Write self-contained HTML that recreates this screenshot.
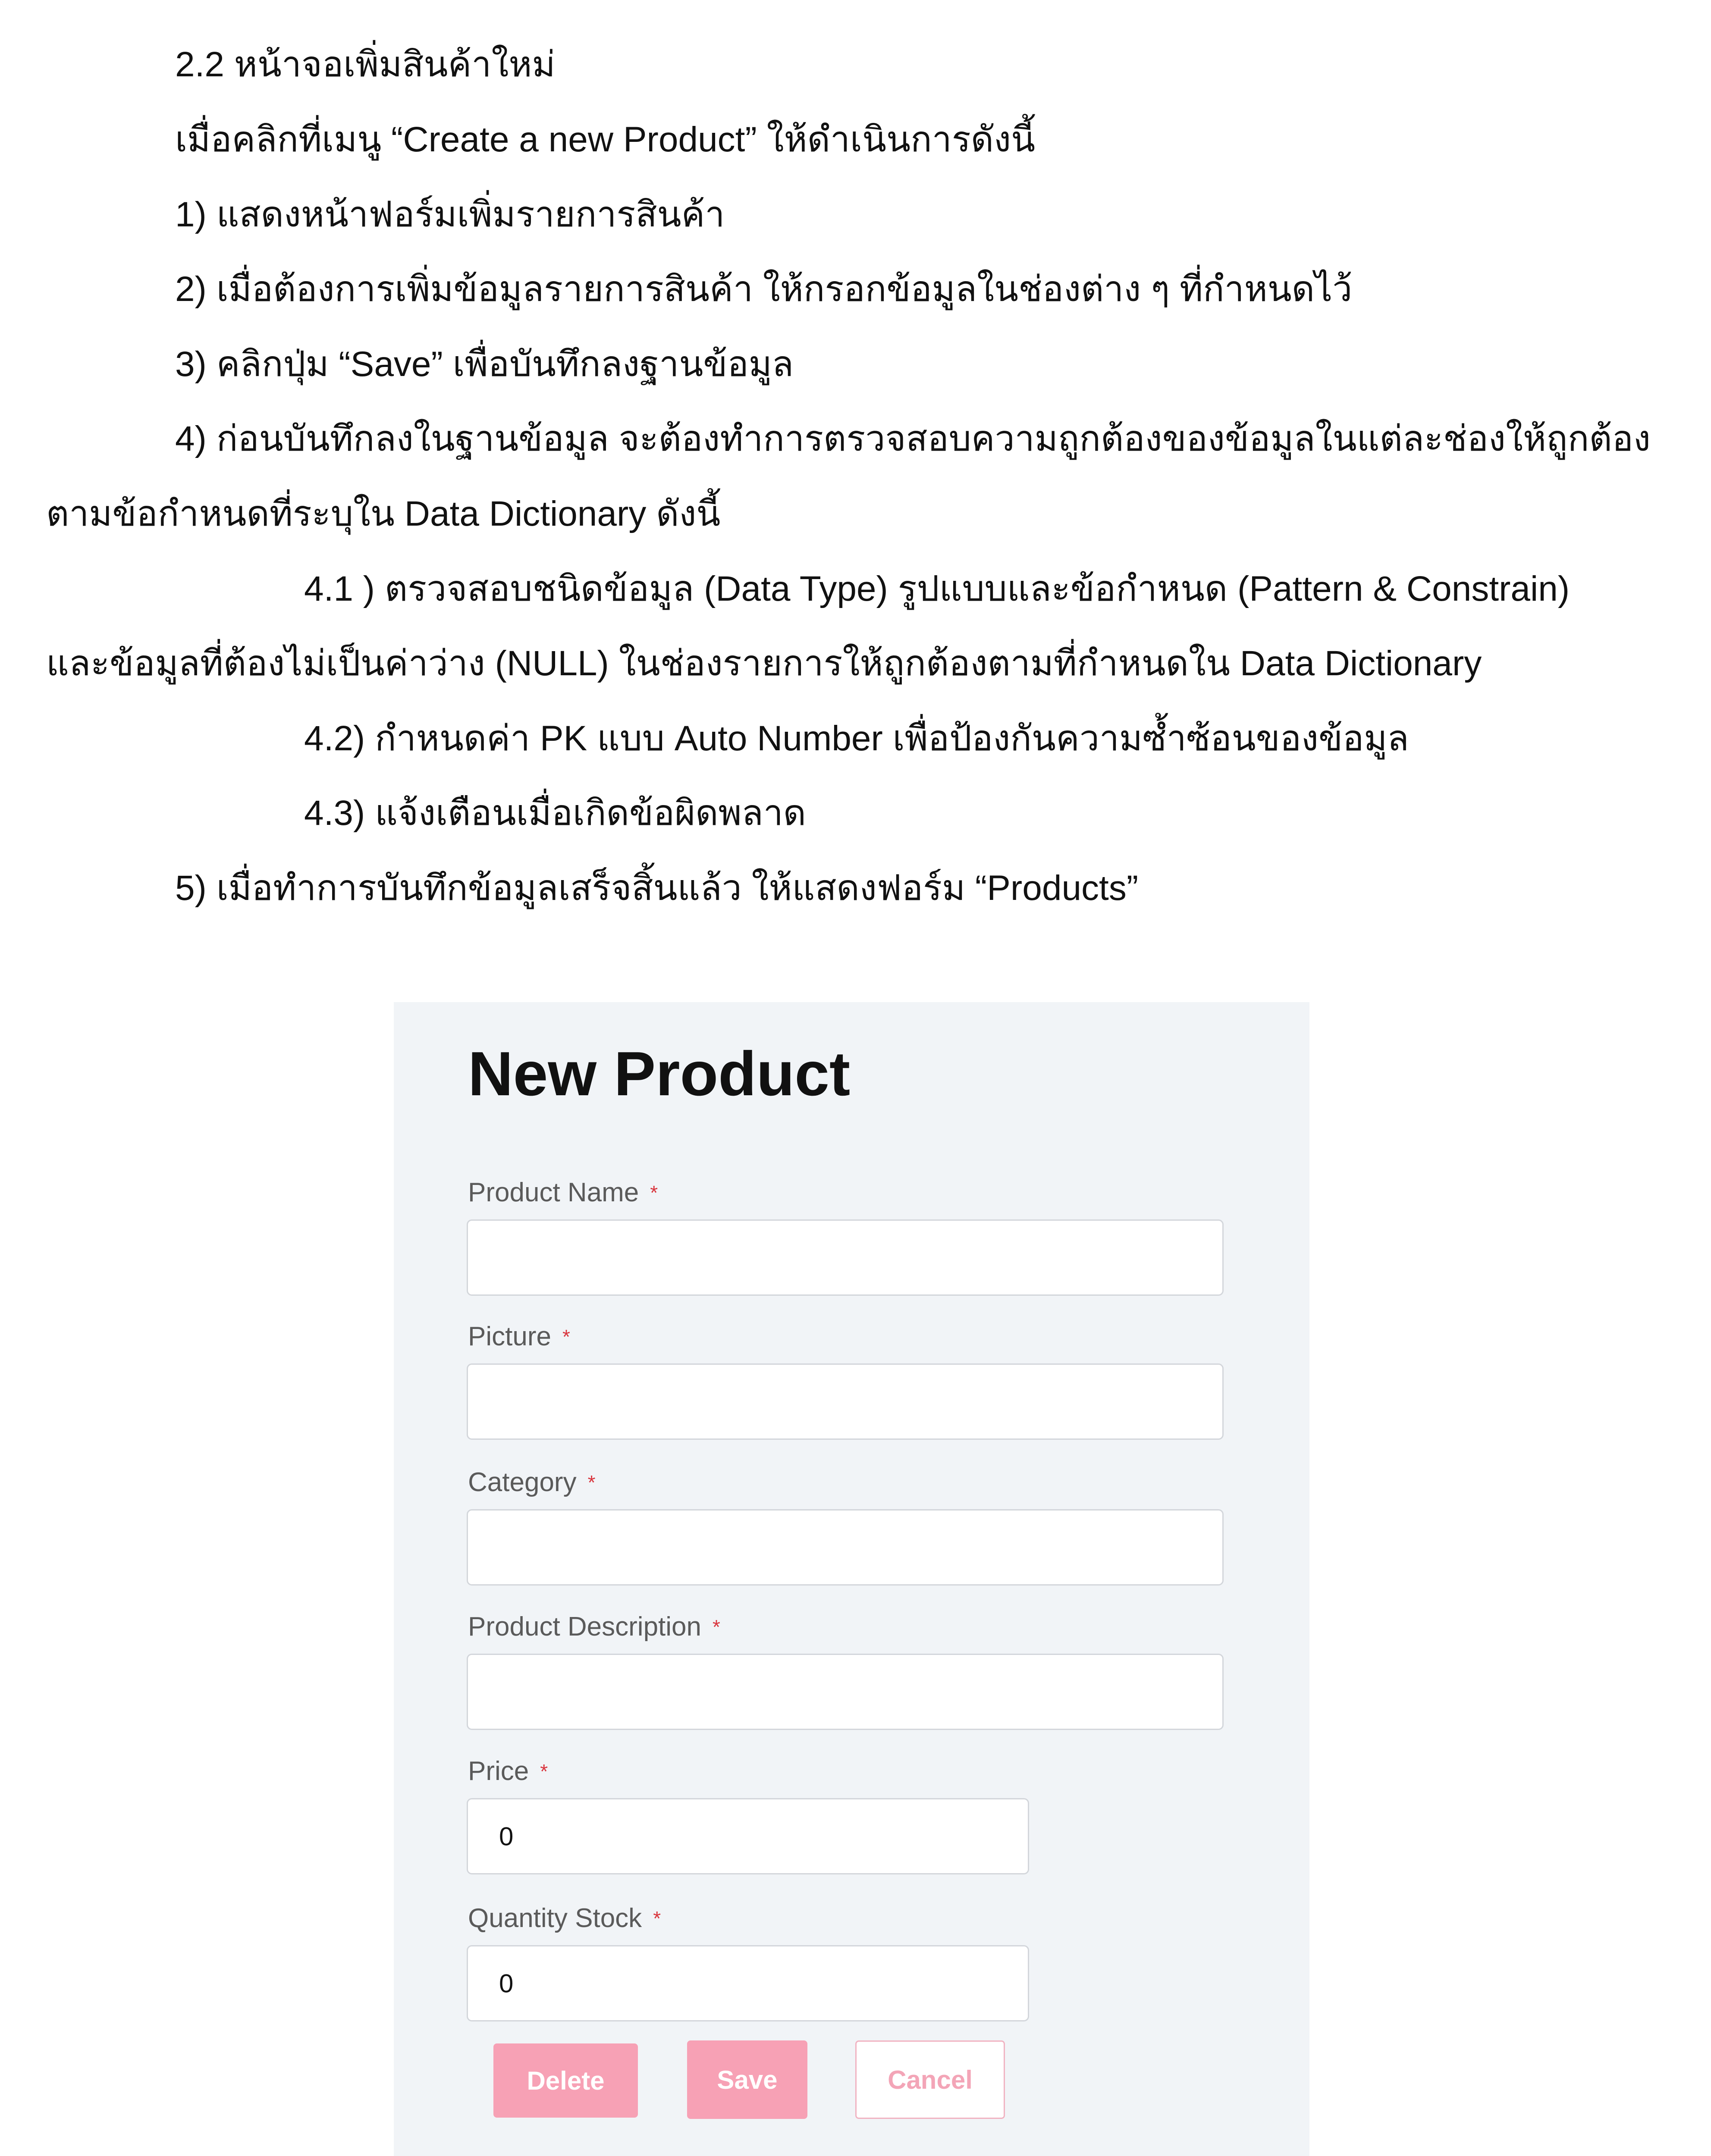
<!DOCTYPE html>
<html><head><meta charset="utf-8">
<style>
html,body{margin:0;padding:0;background:#fff;width:3967px;height:5134px;overflow:hidden;}
body{position:relative;font-family:"Liberation Sans","DejaVu Sans",sans-serif;color:#111;}
.t{position:absolute;font-size:82px;line-height:100px;white-space:nowrap;transform:translateY(-50%);}
.panel{position:absolute;left:913px;top:2324px;width:2123px;height:2681px;background:#f1f4f7;}
.title{position:absolute;left:1085px;top:2490px;transform:translateY(-50%);font-size:145px;line-height:170px;font-weight:600;color:#111;white-space:nowrap;}
.lbl{position:absolute;left:1085px;transform:translateY(-50%);font-size:62px;line-height:80px;color:#5a5a5a;white-space:nowrap;}
.lbl span{color:#d9363e;font-size:46px;vertical-align:top;margin-left:26px;}
.inp{position:absolute;left:1082px;width:1749px;height:171px;background:#fff;border:3px solid #d3d6db;border-radius:12px;}
.inp.s{width:1298px;}
.inp b{position:absolute;left:72px;top:50%;transform:translateY(-50%);font-weight:normal;font-size:60px;color:#111;}
.btn{position:absolute;background:#f7a1b5;color:#fff;font-weight:bold;font-size:60px;display:flex;align-items:center;justify-content:center;border-radius:8px;}
</style></head><body>
<div class="t" style="left:406px;top:150px">2.2 หน้าจอเพิ่มสินค้าใหม่</div>
<div class="t" style="left:406px;top:324px">เมื่อคลิกที่เมนู “Create a new Product” ให้ดำเนินการดังนี้</div>
<div class="t" style="left:406px;top:498px">1) แสดงหน้าฟอร์มเพิ่มรายการสินค้า</div>
<div class="t" style="left:406px;top:671px">2) เมื่อต้องการเพิ่มข้อมูลรายการสินค้า ให้กรอกข้อมูลในช่องต่าง ๆ ที่กำหนดไว้</div>
<div class="t" style="left:406px;top:845px">3) คลิกปุ่ม “Save” เพื่อบันทึกลงฐานข้อมูล</div>
<div class="t" style="left:406px;top:1018px">4) ก่อนบันทึกลงในฐานข้อมูล จะต้องทำการตรวจสอบความถูกต้องของข้อมูลในแต่ละช่องให้ถูกต้อง</div>
<div class="t" style="left:107px;top:1192px">ตามข้อกำหนดที่ระบุใน Data Dictionary ดังนี้</div>
<div class="t" style="left:705px;top:1366px">4.1 ) ตรวจสอบชนิดข้อมูล (Data Type) รูปแบบและข้อกำหนด (Pattern &amp; Constrain)</div>
<div class="t" style="left:107px;top:1539px">และข้อมูลที่ต้องไม่เป็นค่าว่าง (NULL) ในช่องรายการให้ถูกต้องตามที่กำหนดใน Data Dictionary</div>
<div class="t" style="left:705px;top:1713px">4.2) กำหนดค่า PK แบบ Auto Number เพื่อป้องกันความซ้ำซ้อนของข้อมูล</div>
<div class="t" style="left:705px;top:1886px">4.3) แจ้งเตือนเมื่อเกิดข้อผิดพลาด</div>
<div class="t" style="left:406px;top:2060px">5) เมื่อทำการบันทึกข้อมูลเสร็จสิ้นแล้ว ให้แสดงฟอร์ม “Products”</div>

<div class="panel"></div>
<div class="title">New Product</div>
<div class="lbl" style="top:2766px">Product Name<span>*</span></div>
<div class="inp" style="top:2828px"></div>
<div class="lbl" style="top:3100px">Picture<span>*</span></div>
<div class="inp" style="top:3162px"></div>
<div class="lbl" style="top:3438px">Category<span>*</span></div>
<div class="inp" style="top:3500px"></div>
<div class="lbl" style="top:3773px">Product Description<span>*</span></div>
<div class="inp" style="top:3835px"></div>
<div class="lbl" style="top:4108px">Price<span>*</span></div>
<div class="inp s" style="top:4170px"><b>0</b></div>
<div class="lbl" style="top:4449px">Quantity Stock<span>*</span></div>
<div class="inp s" style="top:4511px"><b>0</b></div>
<div class="btn" style="left:1144px;top:4739px;width:335px;height:172px;">Delete</div>
<div class="btn" style="left:1593px;top:4732px;width:279px;height:182px;">Save</div>
<div class="btn" style="left:1983px;top:4732px;width:341px;height:176px;background:#fff;border:3px solid #f1b3c2;color:#f3a5b7;">Cancel</div>
</body></html>
